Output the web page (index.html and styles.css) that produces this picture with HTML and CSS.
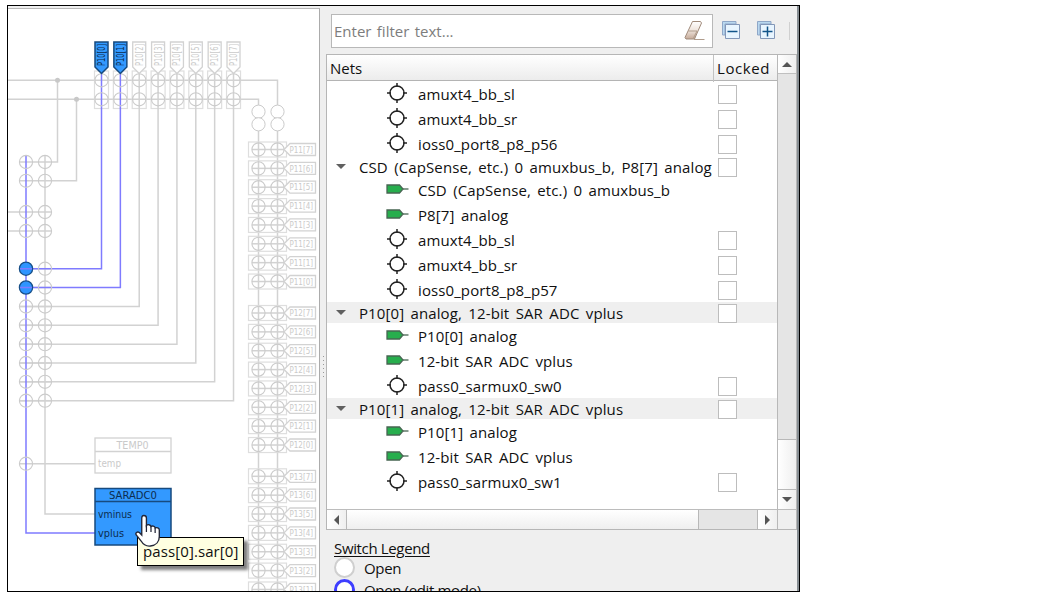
FILE: index.html
```
<!DOCTYPE html>
<html lang="en">
<head>
<meta charset="utf-8">
<title>Analog Route Editor</title>
<link rel="stylesheet" href="styles.css">
</head>
<body>
<svg class="defs" width="0" height="0">
  <defs>
    <g id="i-switch"><circle cx="11" cy="10" r="7"/><path d="M11 0v4M11 16v4M1 10h4M17 10h4"/></g>
    <g id="i-pin"><path d="M17 6h5.500" fill="none"/><path d="M1 2h12.500l3.500 4-3.500 4H1z" fill="#27ae4d"/></g>
  </defs>
</svg>
<main class="frame">
  <section class="canvas">
    <svg class="schematic" width="311" height="583" viewBox="8 8 311 583" id="schematic"></svg>
    <div class="tooltip"><span>pass[0].sar[0]</span></div>
    <svg class="cursor" width="27" height="34" viewBox="0 0 26 34" preserveAspectRatio="none"><path d="M8.500 1.500c1.500 0 2.500 1 2.500 2.500v7.500c1-1.300 4-1 4.400 1 1.200-1 3.700-.5 4 1.300 1.500-.6 4 .2 4 2.200v6.500c0 5-3 9-8.500 9.500-4.500.5-7-1.500-9-5L1.200 21c-1.200-2 1-3.800 3-2.500L6.500 21V4c0-1.500.6-2.500 2-2.500z" fill="#fff" stroke="#222638" stroke-width="1.300"/><path d="M11 11v7M15.400 12.500V18M19.400 14v5" stroke="#222638" stroke-width="1.200" fill="none"/></svg>
  </section>
  <div class="splitter"><i></i><i></i><i></i><i></i><i></i><i></i></div>
  <aside class="panel">
    <div class="toolbar">
      <div class="filter"><span>Enter filter text...</span>
        <svg width="24" height="24" viewBox="0 0 24 24"><defs><linearGradient id="er" x1="0" y1="0" x2="0" y2="1"><stop offset="0" stop-color="#fff"/><stop offset=".5" stop-color="#efe4dc"/><stop offset="1" stop-color="#c5aa98"/></linearGradient></defs><path d="M10.500 3.500h8l1 1.500-7 16H4L3 19.500z" fill="url(#er)" stroke="#a08a7a"/><path d="M6.500 13h8.500M12 21.500h10.500M15 13l-4 8" stroke="#b09c8c" fill="none"/></svg>
      </div>
      <svg class="tool" width="20" height="20" viewBox="0 0 20 20"><path d="M1.500 15V1.500H15V4H4v11z" fill="#b9d8ef" stroke="#8fa7c8"/><path d="M4.500 4.500h14v14h-14z" fill="#e8f5ff" stroke="#8297b8"/><path d="M6.500 11.500h10" stroke="#12558a" stroke-width="1.500"/></svg>
      <svg class="tool second" width="20" height="20" viewBox="0 0 20 20"><path d="M1.500 15V1.500H15V4H4v11z" fill="#b9d8ef" stroke="#8fa7c8"/><path d="M4.500 4.500h14v14h-14z" fill="#e8f5ff" stroke="#8297b8"/><path d="M6.500 11.500h10M11.500 6.500v10" stroke="#12558a" stroke-width="1.500"/></svg>
      <i class="sep"></i>
    </div>
    <div class="table">
      <div class="tree">
        <div class="head"><div>Nets</div><div>Locked</div></div>
        <div class="rows" id="rows"></div>
      </div>
      <div class="vscroll"><b class="up"></b><div class="track"></div><div class="thumb"></div><b class="down"></b></div>
      <div class="hscroll"><b class="left"></b><div class="thumb"></div><div class="track"></div><b class="right"></b></div>
      <div class="corner"></div>
    </div>
    <div class="legend">
      <div class="title">Switch Legend</div>
      <div class="item"><i class="ring"></i><span>Open</span></div>
      <div class="item"><i class="ring edit"></i><span>Open (edit mode)</span></div>
    </div>
  </aside>
</main>
<script src="app.js"></script>
</body>
</html>
```
FILE: styles.css
```
* { box-sizing: border-box; }
body { margin: 0; background: #fff; font: 15px/20px "Open Sans", "Noto Sans", sans-serif; color: #101010; }
.defs { position: absolute; }
.frame { margin: 5px 0 0 7px; width: 793px; height: 587px; border: 1px solid #000; background: #efefef; display: grid; grid-template-columns: 312px 6px 1fr; overflow: hidden; }
.canvas { position: relative; margin-top: 2px; border-top: 1px solid #b8b8b8; border-right: 1px solid #ababab; background: #fff; overflow: hidden; }
.schematic { display: block; margin-top: -1px; }
.schematic text { font-family: "DejaVu Sans", sans-serif; font-size: 10px; }
.schematic text.port { font-size: 8.500px; }
.wire { stroke: #d2d2d2; stroke-width: 1.500; fill: none; }
.net { stroke: #7f7bff; stroke-width: 1.500; fill: none; }
.sw { stroke: #cbcbcb; stroke-width: 1.100; fill: none; }
.coupler { stroke: #cbcbcb; fill: #fff; }
.closed { stroke: #174f88; fill: #2e94ff; stroke-width: 1.300; }
.box { stroke: #dedede; stroke-width: 1.200; fill: none; }
.tag { stroke: #d2d2d2; stroke-width: 1.300; fill: #fff; }
.tag-on { stroke: #174a7e; stroke-width: 1.500; fill: #3399ff; }
.off { fill: #cacaca; }
.on { fill: #0c2d50; }
.dot { fill: #c8c8c8; }
.tooltip { position: absolute; left: 129px; top: 528px; width: 107px; height: 29px; border: 1px solid #000; background: #ffffe1; box-shadow: 4px 4px 3px rgba(0,0,0,.5); line-height: 27px; padding-left: 5px; white-space: nowrap; letter-spacing: .1px; }
.cursor { position: absolute; left: 127px; top: 505px; }
.splitter { display: flex; flex-direction: column; gap: 3px; padding: 350px 0 0 3px; }
.splitter i { width: 1px; height: 1px; background: #999; }
.panel { display: flex; flex-direction: column; border-right: 2px solid #868d92; min-width: 0; }
.toolbar { height: 48px; flex: none; padding: 8px 0 0 5px; display: flex; align-items: flex-start; }
.filter { width: 382px; height: 34px; border: 1px solid #b8b8b8; background: #fff; color: #7d7d7d; display: flex; justify-content: space-between; padding: 3px 6px 0 2px; line-height: 26px; word-spacing: 1.500px; }
.tool { margin: 6px 0 0 8px; }
.tool.second { margin-left: 15px; }
.sep { width: 1px; height: 18px; margin: 8px 0 0 13px; background: #d0d0d0; }
.table { display: grid; grid-template-columns: 450px 1fr; grid-template-rows: 455px 19px; border: 1px solid #b6b6b6; border-right: 0; flex: none; height: 476px; }
.tree { background: #fff; overflow: hidden; border-bottom: 1px solid #bcbcbc; }
.head { display: grid; grid-template-columns: 386px 1fr; height: 26px; border-bottom: 1px solid #b4b4b4; background: linear-gradient(#fff, #ececec); line-height: 27px; }
.head div { padding-left: 3px; }
.head div + div { border-left: 1px solid #c2c2c2; padding-left: 3px; letter-spacing: .6px; }
.rows { letter-spacing: .1px; word-spacing: 2.400px; }
.row { display: grid; grid-template-columns: 59px 332px 1fr; height: 25px; align-items: center; white-space: nowrap; }
.row.parent { height: 21px; grid-template-columns: 32px 359px 1fr; }
.row.parent.shade { background: #efefef; }
.icon { width: 24px; height: 21px; display: block; flex: none; stroke: #222; stroke-width: 1.500; fill: #fff; }
.name { display: flex; align-items: center; }
.name .label { padding: 1px 0 0 8px; }
.icon.pin { stroke: #476552; stroke-width: 1.300; height: 12px; margin: -2px 0 0; }
.row.parent .arrow { margin-left: 9px; border: 5px solid transparent; border-top-color: #606060; border-bottom: 0; width: 10px; }
.check { width: 19px; height: 19px; border: 1px solid #bdbdbd; background: #fff; margin-top: 1px; }
.vscroll { display: grid; grid-template-rows: 18px 1fr 50px 19px; border-left: 1px solid #b8b8b8; border-right: 1px solid #b8b8b8; border-bottom: 1px solid #bcbcbc; }
.vscroll b, .hscroll b { display: grid; place-items: center; background: linear-gradient(90deg, #fff, #efefef); }
.vscroll b::before, .hscroll b::before { content: ""; border: 5px solid transparent; }
.up::before { border-bottom-color: #555 !important; border-top-width: 0 !important; }
.down::before { border-top-color: #555 !important; border-bottom-width: 0 !important; }
.left::before { border-right-color: #555 !important; border-left-width: 0 !important; }
.right::before { border-left-color: #555 !important; border-right-width: 0 !important; }
.track { background: #e5e5e5; }
.vscroll .track { border-top: 1px solid #c0c0c0; border-bottom: 1px solid #b8b8b8; }
.vscroll .thumb { background: linear-gradient(90deg, #fff, #efefef); border-bottom: 1px solid #b8b8b8; }
.hscroll { display: grid; grid-template-columns: 19px 352px 1fr 19px; }
.hscroll .thumb { background: linear-gradient(#fff, #efefef); border-left: 1px solid #b8b8b8; }
.hscroll .track { border-left: 1px solid #b8b8b8; border-right: 1px solid #b8b8b8; }
.corner { border-left: 1px solid #b8b8b8; border-right: 1px solid #b8b8b8; }
.legend { padding: 9px 0 0 8px; overflow: hidden; flex: 1; letter-spacing: -.35px; }
.legend .title { height: 18px; text-decoration: underline; text-underline-offset: 2px; line-height: 19px; }
.item { display: flex; gap: 8px; height: 22px; line-height: 23px; }
.ring { width: 21px; height: 21px; flex: none; border: 2px solid #cfcfcf; border-radius: 50%; background: #fff; }
.ring.edit { border: 3px solid #3e3eff; }
.item span { padding-left: 1px; white-space: nowrap; }
```
FILE: app.js
```
const P = 18.86;
const out = [];
const line = (cls, d) => out.push(`<path class="${cls}" d="${d}"/>`);
const circle = (cls, x, y, r = 6.6) => out.push(`<circle class="${cls}" cx="${x}" cy="${y}" r="${r}"/>`);
const text = (cls, x, y, s, w, extra = "") => out.push(`<text class="${cls}" x="${x}" y="${y}" textLength="${w}" lengthAdjust="spacingAndGlyphs" ${extra}>${s}</text>`);

const colX = i => 101.5 + P * i;
const leftY = [162, 180.8, 212, 231, 268.7, 287.5, 306.5, 325.3, 344.2, 363, 381.8, 400.7];

// Analog bus wires
line("wire", "M8 80.300H277.500V105M8 99.300H258.500V105M57.500 80V162H20M76.500 99V180.800H20M8 212H52M8 231H52M45 155V514H95M20 463.700H95");
line("wire", "M258.500 131V591M277.500 131V591");
circle("dot", 57.5, 80.3, 2.5);
circle("dot", 76.5, 99.3, 2.5);

// Port 10 columns with their routes down to the SAR mux
for (let i = 0; i < 8; i++) {
  const x = colX(i), y = leftY[i + 4], on = i < 2;
  out.push(`<rect class="box" x="${x - 7}" y="71" width="14" height="37.500"/>`);
  line("wire", `M20 ${y}H52`);
  line(on ? "net" : "wire", `M${x} 72V${y}H${on ? 26 : 20}`);
  circle("sw", x, 80.3);
  circle("sw", x, 99.3);
  line(on ? "tag-on" : "tag", `M${x - 6.500} 42H${x + 6.500}V67L${x} 73.500L${x - 6.500} 67Z`);
  text(on ? "on" : "off", 0, 0, `P10[${i}]`, 22, `transform="translate(${x + 3.500} 66) rotate(-90)"`);
}
line("net", "M26 155V533H95");
leftY.forEach((y, i) => {
  circle(i === 4 || i === 5 ? "closed" : "sw", 26, y);
  circle("sw", 45, y);
});
line("net", "M20 268.700H32M20 287.500H32");
circle("sw", 26, 463.7);

// Couplers between bus segments
[258.5, 277.5].forEach(x => { circle("coupler", x, 111.7); circle("coupler", x, 124.3); });

// Ports 11 to 13
[[11, 149.5, 8], [12, 313, 8], [13, 476.3, 7]].forEach(([port, top, n]) => {
  for (let i = 0; i < n; i++) {
    const y = top + P * i;
    out.push(`<rect class="box" x="248.500" y="${y - 7.500}" width="38" height="15"/>`);
    line("wire", `M252 ${y}H284`);
    circle("sw", 258.5, y);
    circle("sw", 277.5, y);
    line("tag", `M284 ${y}L290 ${y - 6}H315.500V${y + 6}H290Z`);
    text("off port", 289.5, y + 3.2, `P${port}[${7 - i}]`, 23.5);
  }
});

// Fixed-function blocks
out.push('<rect class="tag" x="95" y="438" width="76" height="35"/>');
line("tag", "M95 451.500H171");
text("off", 116.5, 449, "TEMP0", 32);
text("off", 98, 467, "temp", 23);
out.push('<rect class="tag-on" x="95" y="488.500" width="76" height="56.500"/>');
line("tag-on", "M95 501.500H171");
text("on", 109, 499, "SARADC0", 48);
text("on", 98, 517.5, "vminus", 34);
text("on", 98, 536.5, "vplus", 26);
document.getElementById("schematic").innerHTML = out.join("");

// Net tree: s = switch, p = pin, g/G = group (G shaded)
const nets = [
  ["s", "amuxt4_bb_sl"], ["s", "amuxt4_bb_sr"], ["s", "ioss0_port8_p8_p56"],
  ["g", "CSD (CapSense, etc.) 0 amuxbus_b, P8[7] analog"],
  ["p", "CSD (CapSense, etc.) 0 amuxbus_b"], ["p", "P8[7] analog"],
  ["s", "amuxt4_bb_sl"], ["s", "amuxt4_bb_sr"], ["s", "ioss0_port8_p8_p57"],
  ["G", "P10[0] analog, 12-bit SAR ADC vplus"],
  ["p", "P10[0] analog"], ["p", "12-bit SAR ADC vplus"], ["s", "pass0_sarmux0_sw0"],
  ["G", "P10[1] analog, 12-bit SAR ADC vplus"],
  ["p", "P10[1] analog"], ["p", "12-bit SAR ADC vplus"], ["s", "pass0_sarmux0_sw1"]
];
document.getElementById("rows").innerHTML = nets.map(([k, s]) => {
  const check = k === "p" ? "" : '<i class="check"></i>';
  if (k === "g" || k === "G") return `<div class="row parent${k === "G" ? " shade" : ""}"><i class="arrow"></i><span class="label">${s}</span>${check}</div>`;
  return `<div class="row"><span></span><div class="name"><svg class="icon${k === "p" ? " pin" : ""}" viewBox="0 0 24 ${k === "p" ? 12 : 21}"><use href="#${k === "p" ? "i-pin" : "i-switch"}"/></svg><span class="label">${s}</span></div>${check}</div>`;
}).join("");
```
